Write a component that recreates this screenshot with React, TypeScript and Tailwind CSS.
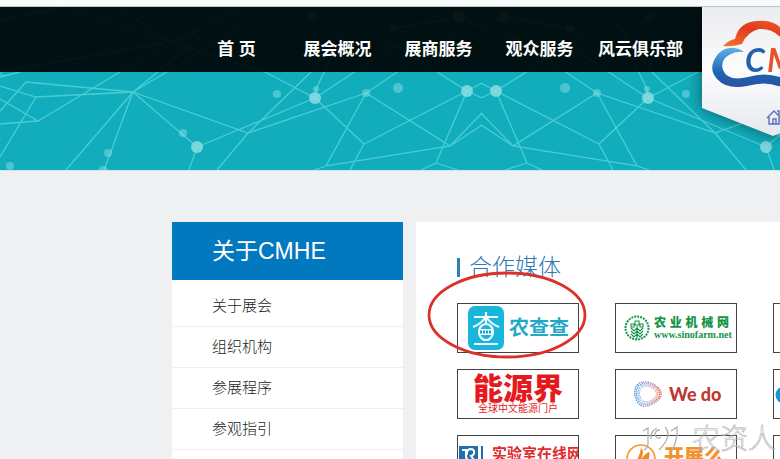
import type { ReactNode } from "react";

const navItems = ["首 页", "展会概况", "展商服务", "观众服务", "风云俱乐部"];
const sideItems = ["关于展会", "组织机构", "参展程序", "参观指引"];

const networkLines =
  "M0 77L20 72M0 74L6 76M0 86L36 97L133 92L26 82L0 111M0 99L38 121L0 124M36 97L0 157M38 121L120 72L200 30M133 92L200 38M133 92L240 28M133 92L66 170M133 92L104 170M133 92L197 147L189 170M133 92L248 133L366 93L460 30M197 147L315 98L364 144L350 170M248 133L217 170M245 136L311 72L350 20M170 42L265 72L315 98L316 89L340 40M315 98L400 42M366 93L326 166L450 146L366 93M314 170L326 166M364 144L467 91L380 36M467 91L436 163L421 170M436 163L458 170M450 146L482 113M450 146L482 125M467 91L482 83M467 91L482 98M0 20L60 8M0 72L170 42L240 8M170 42L70 8M170 42L120 8M459 17L482 28M459 17L390 29";

const networkDots: [number, number, number][] = [
  [197, 147, 6], [183, 133, 4], [108, 153, 4], [103, 171, 5], [10, 166, 4],
  [315, 98, 6], [277, 94, 4], [316, 89, 3], [366, 93, 4], [398, 88, 5],
  [467, 91, 6], [313, 17, 5], [393, 29, 4], [459, 17, 6],
];

function NetworkHalf() {
  return (
    <>
      <path d={networkLines} fill="none" stroke="#6fe2e4" strokeOpacity="0.6" strokeWidth="1.3" />
      {networkDots.map(([x, y, r]) => (
        <circle key={`${x}-${y}`} cx={x} cy={y} r={r} fill="#8bdce4" fillOpacity={r > 5 ? 0.85 : 0.5} />
      ))}
    </>
  );
}

function Network() {
  return (
    <svg className="absolute top-0 left-0" width="964" height="171" viewBox="0 0 964 171" aria-hidden="true">
      <g transform="translate(0 -7)">
        <NetworkHalf />
        <g transform="translate(963 0) scale(-1 1)">
          <NetworkHalf />
        </g>
      </g>
    </svg>
  );
}

function LogoBadge() {
  return (
    <svg className="absolute top-0 left-0 drop-shadow-[0_0_8px_rgba(0,0,0,0.45)]" width="142" height="131" viewBox="0 0 142 131" role="img" aria-label="CMHE">
      <defs>
        <linearGradient id="badge" x1="0" y1="0" x2="0" y2="1">
          <stop offset="0" stopColor="#ebecee" />
          <stop offset="0.5" stopColor="#fcfcfd" />
          <stop offset="1" stopColor="#e6e8ed" />
        </linearGradient>
        <linearGradient id="flame" x1="0" y1="1" x2="1" y2="0">
          <stop offset="0" stopColor="#f7762f" />
          <stop offset="0.5" stopColor="#e0391d" />
          <stop offset="1" stopColor="#ef6a2b" />
        </linearGradient>
        <linearGradient id="wave" x1="0" y1="0" x2="0" y2="1">
          <stop offset="0" stopColor="#5cb2e5" />
          <stop offset="0.6" stopColor="#1e64b4" />
          <stop offset="1" stopColor="#2a4ea0" />
        </linearGradient>
      </defs>
      <path d="M0 0H142V101L71 129L0 101Z" fill="url(#badge)" />
      <path d="M21 39Q27 33 33 32Q37 15 55 14Q74 12 83 26L101 30L98 38Q85 34 77 29Q69 21 57 22Q45 25 40 37Q29 40 21 39Z" fill="url(#flame)" />
      <path d="M41 44Q27 36 16 47Q5 61 15 72Q25 83 45 79Q63 74 76 79L100 82V74L78 70Q62 65 46 70Q26 75 21 63Q18 53 27 48Q34 44 41 45Z" fill="url(#wave)" />
      <text x="43" y="65" fill="#2461ab" className="font-[Lato] text-[32px] font-bold italic">C</text>
      <text x="65" y="65" fill="#e5532c" className="font-[Lato] text-[32px] font-bold italic">M</text>
      <path d="M65 111L72 104L79 111M67 110V117H77V110M71 117V112H74V117M75 104H77V108" fill="none" stroke="#5c6fb8" strokeWidth="1.4" />
    </svg>
  );
}

function Partner({ label, children }: { label: string; children?: ReactNode }) {
  return (
    <a href="#" aria-label={label} className="flex h-[50px] items-center overflow-hidden border border-[#444] bg-white">
      {children}
    </a>
  );
}

function NongchachaLogo() {
  return (
    <>
      <svg className="ml-[10px] shrink-0" width="36" height="46" viewBox="0 0 36 46" aria-hidden="true">
        <rect x="0" y="1" width="36" height="44" rx="7" fill="#19b6dc" />
        <g fill="none" stroke="#eefcff" strokeWidth="2.2">
          <path d="M6 12H30M18 7V19M17 13Q13 19 5 22M19 13Q23 19 31 22M6 39H30" />
          <ellipse cx="18" cy="27" rx="7" ry="8" />
        </g>
        <rect x="10" y="24" width="16" height="6" rx="3" fill="#eefcff" />
        <path d="M12 27H24" stroke="#19a0c8" strokeWidth="3" strokeDasharray="2 1" />
      </svg>
      <span className="ml-[5px] text-[20px] font-bold text-[#22a9c8]">农查查</span>
    </>
  );
}

function SinofarmLogo() {
  return (
    <>
      <svg className="ml-2 shrink-0" width="26" height="28" viewBox="0 0 26 28" fill="none" stroke="#159447" aria-hidden="true">
        <circle cx="13" cy="14" r="11.5" strokeWidth="2" strokeDasharray="2 1" />
        <path d="M11 7H15V11H11ZM7 10H10V13H7ZM16 10H19V13H16ZM7 14L10 17L13 14L16 17L19 14M7 17L10 20L13 17L16 20L19 17M7 20L10 23L13 20L16 23L19 20M13 12V25" strokeWidth="1.1" />
      </svg>
      <span className="ml-1 flex flex-col text-[#159447]">
        <span className="flex w-[75px] justify-between text-[12px] leading-[14px] font-black">
          {Array.from("农业机械网").map((c) => <span key={c}>{c}</span>)}
        </span>
        <span className="font-['Liberation_Serif',serif] text-[10px] leading-[10px] font-bold">www.sinofarm.net</span>
      </span>
    </>
  );
}

function EnergyLogo() {
  return (
    <span className="flex w-full flex-col items-center text-[#e6191c]">
      <span className="text-[30px] leading-[30px] font-black">能源界</span>
      <span className="text-[10px] leading-[10px]">全球中文能源门户</span>
    </span>
  );
}

function WedoLogo() {
  return (
    <>
      <svg className="ml-[18px] shrink-0" width="28" height="26" viewBox="0 0 28 26" fill="none" aria-hidden="true">
        <defs>
          <linearGradient id="wedo">
            <stop offset="0" stopColor="#3b8fdc" />
            <stop offset="0.5" stopColor="#9a8fcb" />
            <stop offset="1" stopColor="#e0503c" />
          </linearGradient>
        </defs>
        {[1, 0.88, 0.76, 0.64].map((s) => (
          <path key={s} transform={`translate(${14 - 14 * s} ${13 - 13 * s}) scale(${s})`} d="M3 4Q8 -1 17 2Q26 6 27 12Q28 18 18 23Q9 28 4 22Q-2 12 3 4Z" stroke="url(#wedo)" strokeWidth="1.2" strokeDasharray="1.5 0.8" />
        ))}
      </svg>
      <span className="ml-[7px] font-[Lato] text-[18px] font-black text-[#bb3a32]">We do</span>
    </>
  );
}

function LabLogo() {
  return (
    <span className="flex self-start pt-[7px]">
      <svg className="shrink-0" width="26" height="34" viewBox="0 0 26 34" fill="none" aria-hidden="true">
        <path d="M1 3H20V28H1Z" fill="#1e6fae" />
        <path d="M4 7H8V13Q8 17 13 18V28M9 12Q8 7 12 6Q17 6 16 10Q16 12 13 13L16 17" stroke="#fff" strokeWidth="2" />
        <path d="M24 3V29" stroke="#1e6fae" strokeWidth="2" />
      </svg>
      <span className="ml-2 text-[15px] leading-[22px] font-bold whitespace-nowrap text-[#df2a2d]">实验室在线网</span>
    </span>
  );
}

function ExpoLogo() {
  return (
    <span className="flex self-start pt-[7px]">
      <svg className="ml-[10px] shrink-0" width="30" height="34" viewBox="0 0 30 34" fill="none" aria-hidden="true">
        <circle cx="15" cy="16" r="14" stroke="#f39a32" strokeWidth="1.6" />
        <path d="M5 25Q13 17 15 5Q19 8 15 16Q20 10 23 9Q25 13 20 21Q25 18 27 19Q22 28 15 28Q17 22 14 22Q10 27 5 25Z" fill="#f08b1e" />
      </svg>
      <span className="ml-[8px] text-[20px] leading-[28px] font-black text-[#f0932c]">开展么</span>
    </span>
  );
}

function BlueLogo() {
  return (
    <svg className="shrink-0" width="30" height="30" viewBox="0 0 30 30" aria-hidden="true">
      <circle cx="10" cy="16" r="6" fill="none" stroke="#1497d4" strokeWidth="5" />
    </svg>
  );
}

export default function App() {
  return (
    <div className="relative h-screen overflow-hidden bg-[#eff0f2] font-['Liberation_Sans','Noto_Sans_CJK_SC',sans-serif]">
      <div className="h-[7px] border-b border-[#b9c5c8] bg-[#f8fafb]" />
      <header className="relative h-[164px] overflow-hidden border-b border-[#c8eaf0] bg-[#11adbd]">
        <Network />
        <div className="relative flex h-[65px] bg-black/90 pl-[186px]">
          <nav className="flex shrink-0 pt-[31px]">
            {navItems.map((item) => (
              <a key={item} href="#" className="w-[101px] text-center text-[17px] leading-[24px] font-bold whitespace-pre text-white">
                {item}
              </a>
            ))}
          </nav>
          <a href="#" className="relative ml-[11px] w-[142px] shrink-0">
            <LogoBadge />
          </a>
        </div>
      </header>

      <div className="flex items-start gap-[13px] pt-[51px] pl-[172px]">
        <aside className="w-[231px] shrink-0 bg-white pb-10">
          <h2 className="h-[58px] bg-[#0278bf] pl-10 text-[23px] leading-[58px] text-white">关于CMHE</h2>
          <ul className="pt-[6px]">
            {sideItems.map((item) => (
              <li key={item} className="border-b border-[#eef0f3]">
                <a href="#" className="block pl-10 text-[15px] leading-[40px] font-light text-[#222]">{item}</a>
              </li>
            ))}
          </ul>
        </aside>

        <main className="min-w-0 flex-1 overflow-hidden bg-white pt-[31px] pb-10 pl-[41px]">
          <h1 className="flex items-center gap-[9px] text-[23px] leading-[28px] font-light text-[#2f78b8]">
            <span className="h-[19px] w-[3px] bg-[#2d80b8]" />
            合作媒体
          </h1>
          <div className="mt-[22px] grid grid-cols-[122px_122px_122px] gap-x-[36px] gap-y-[16px]">
            <Partner label="农查查"><NongchachaLogo /></Partner>
            <Partner label="农业机械网"><SinofarmLogo /></Partner>
            <Partner label="合作伙伴" />
            <Partner label="能源界"><EnergyLogo /></Partner>
            <Partner label="We do"><WedoLogo /></Partner>
            <Partner label="合作伙伴"><BlueLogo /></Partner>
            <Partner label="实验室在线网"><LabLogo /></Partner>
            <Partner label="开展么"><ExpoLogo /></Partner>
            <Partner label="合作伙伴" />
          </div>
        </main>
      </div>

      <svg className="pointer-events-none absolute top-[270px] left-[426px]" width="162" height="90" viewBox="0 0 162 90" aria-hidden="true">
        <ellipse cx="81" cy="45" rx="78" ry="42" fill="none" stroke="#dc3127" strokeWidth="2.8" />
      </svg>

      <svg className="pointer-events-none absolute right-0 bottom-0" width="140" height="38" viewBox="0 0 140 38" fill="none" stroke="#b0b0b0" strokeWidth="0.6" aria-label="191农资人">
        <path d="M3 10L8 7V22Q8 27 4 29M17 7Q10 10 11 18M20 9Q15 9 15 14Q17 19 21 16M25 6Q33 15 19 29M31 10L37 6Q38 20 31 31" strokeWidth="1.3" />
        <text x="52" y="28" className="text-[28px] font-light">农资人</text>
      </svg>
    </div>
  );
}
